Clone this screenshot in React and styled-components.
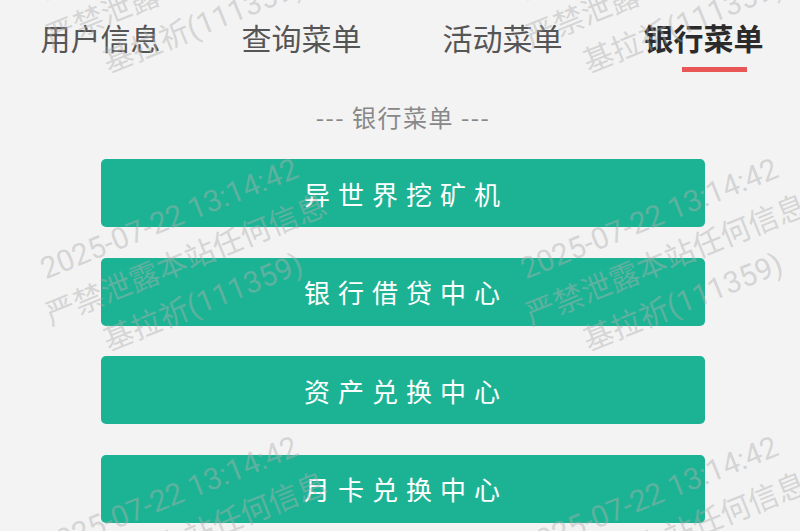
import React from "react";
import styled, { createGlobalStyle } from "styled-components";

const GlobalStyle = createGlobalStyle`
    html, body {
        margin: 0;
        padding: 0;
        background: #f3f3f3;
    }
    body {
        font-family: "Noto Sans CJK SC", "Noto Sans", sans-serif;
    }
`;

const Page = styled.div`
    position: relative;
    height: 100vh;
    overflow: hidden;
    background: #f3f3f3;
`;

const TabBar = styled.div`
    display: grid;
    grid-template-columns: repeat(4, 201px);
    padding-top: 17px;
`;

const Tab = styled.div`
    display: flex;
    flex-direction: column;
    align-items: center;
    cursor: pointer;

    .label {
        font-size: 30px;
        line-height: 40px;
        color: ${(p) => (p.$active ? "#2b2b2b" : "#555")};
        font-weight: ${(p) => (p.$active ? 700 : 400)};
    }
`;

const Underline = styled.div`
    width: 65px;
    height: 5px;
    margin-top: 10px;
    background: #e95656;
    transform: translateX(11px);
`;

const SectionTitle = styled.div`
    margin-top: 30px;
    text-align: center;
    padding-left: 6px;
    font-size: 24px;
    line-height: 30px;
    letter-spacing: 1.5px;
    color: #888;
`;

const Menu = styled.div`
    display: flex;
    flex-direction: column;
    gap: 30.6px;
    padding: 27px 95px 0 101px;
`;

const MenuButton = styled.button`
    height: 68px;
    border: none;
    border-radius: 5px;
    background: #1cb394;
    color: #fff;
    font-family: "Noto Sans CJK SC", sans-serif;
    font-size: 26px;
    letter-spacing: 8px;
    padding: 0 0 0 6px;
    cursor: pointer;
`;

const WatermarkLayer = styled.div`
    position: absolute;
    inset: 0;
    pointer-events: none;
`;

const Watermark = styled.div`
    position: absolute;
    transform: translate(-50%, -50%) rotate(-22deg);
    white-space: pre;
    text-align: center;
    font-family: Roboto, "Noto Sans CJK SC", sans-serif;
    font-size: 30px;
    line-height: 45px;
    color: rgba(175, 175, 175, 0.45);
`;

const tabs = ["用户信息", "查询菜单", "活动菜单", "银行菜单"];
const menus = ["异世界挖矿机", "银行借贷中心", "资产兑换中心", "月卡兑换中心"];

const marks = [];
for (let r = 0; r < 3; r++) {
    for (let c = 0; c < 2; c++) {
        marks.push({ x: 186 + c * 480, y: -18 + r * 278 });
    }
}

export default function App() {
    const current = 3;

    return (
        <Page>
            <GlobalStyle />
            <TabBar>
                {tabs.map((t, i) => (
                    <Tab key={t} $active={i === current}>
                        <span className="label">{t}</span>
                        {i === current ? <Underline /> : ""}
                    </Tab>
                ))}
            </TabBar>

            <SectionTitle>--- {tabs[current]} ---</SectionTitle>

            <Menu>
                {menus.map((m) => (
                    <MenuButton key={m}>{m}</MenuButton>
                ))}
            </Menu>

            <WatermarkLayer>
                {marks.map((m, i) => (
                    <Watermark key={i} style={{ left: m.x, top: m.y }}>
                        {"2025-07-22 13:14:42\n严禁泄露本站任何信息\n基拉祈(111359)"}
                    </Watermark>
                ))}
            </WatermarkLayer>
        </Page>
    );
}
